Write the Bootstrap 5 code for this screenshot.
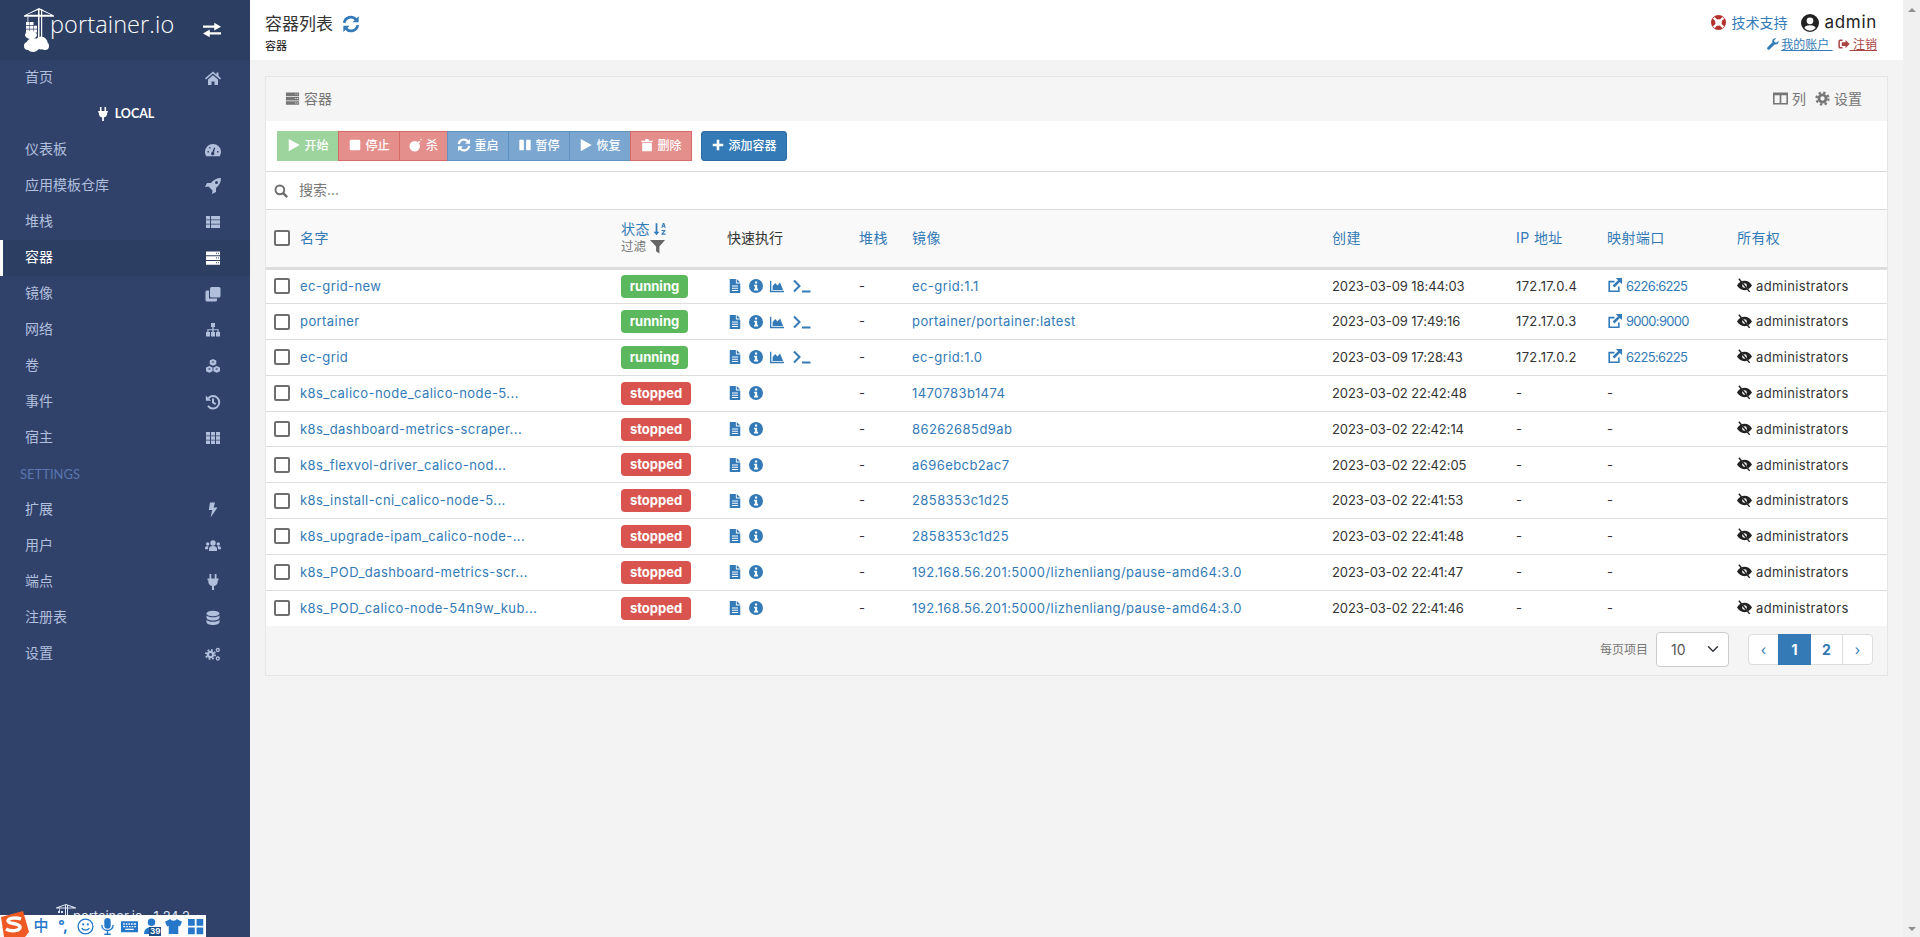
<!DOCTYPE html>
<html lang="zh">
<head>
<meta charset="utf-8">
<title>Portainer</title>
<link href="https://cdn.jsdelivr.net/npm/bootstrap@5.3.0/dist/css/bootstrap.min.css" rel="stylesheet">
<style>
html,body{height:937px;overflow:hidden}
body{font-family:Inter,"Noto Sans CJK SC",sans-serif;font-size:13px;color:#333;background:#f3f3f3;line-height:1.43}
a{color:#337ab7;text-decoration:none}
.ico{width:1em;height:1em;fill:currentColor;flex:none;vertical-align:-.12em}
.shell{height:937px}
.rail{width:250px;background:#30426a;color:#b1bfdd;flex:none}
.rail-top{height:60px;background:#2d3e63;padding-left:24px;padding-right:29px;color:#fff}
.logo-word{font-family:"Open Sans","Noto Sans",sans-serif;font-weight:300;font-size:23.500px;line-height:1;letter-spacing:.1px;margin-left:-6px;margin-top:-10px}
.rail-swap{font-size:18px}
.rail-item{height:36px;padding-left:25px;padding-right:29px;padding-bottom:2px;font-size:14px;color:#b1bfdd}
.rail-item .ico{font-size:16px;margin-top:2px}
.rail-item.on{background:#2d3e63;color:#fff;border-left:3px solid #fff;padding-left:22px}
.rail-env{height:36px;color:#fff;font-size:12.500px;font-weight:700;font-family:Lato,sans-serif}
.rail-env .ico{font-size:14px;margin-right:5px}
.rail-sec{height:36px;padding-left:20px;color:#5a76b0;font-family:Lato,sans-serif;font-size:13px}
.rail-foot{height:42px;padding-left:56px;color:#dfe5f2;font-size:13px;padding-top:9px}
.rail-foot svg{width:20px;height:12px;flex:none}
.rail-foot span{margin-top:4px;margin-left:-3px;line-height:16px;white-space:nowrap}
.stage{min-width:0}
.topbar{height:60px;background:#fff;padding:12px 26px 0 15px}
.crumb-title{font-size:17px;line-height:24px;color:#333}
.crumb-title .ico{color:#337ab7;font-size:18px;margin-left:9px;vertical-align:-.15em}
.crumb-sub{font-size:11px;line-height:16px;color:#111;margin-top:2px}
.who-a{font-size:14px;line-height:22px;margin-top:-1px}
.who-a .sup{color:#337ab7}
.who-a .life{color:#b5312c;font-size:15px;margin-right:5px}
.who-a .usr{font-size:18px;margin-left:14px;margin-right:5px;color:#222;vertical-align:-.2em}
.who-a .nm{font-size:17px;color:#222;letter-spacing:.7px}
.who-b{font-size:12px;line-height:16px;margin-top:3px}
.who-b a{text-decoration:underline}
.who-b .wr{color:#337ab7;margin-right:2px}
.who-b .red{color:#a94442;margin-left:5px}
.panel{margin:16px 15px 0;background:#f5f5f5;border:1px solid #e6e6e6;height:600px}
.panel-head{height:44px;padding:0 25px 0 19px;color:#767676;font-size:14px}
.panel-head .ico{font-size:15px;margin-right:4px;vertical-align:-.15em}
.panel-tools span{margin-left:9px}
.bar{height:51px;background:#fff;border-bottom:1px solid #d9d9d9;padding-left:11px;gap:9px}
.act{font-size:12px;padding:0;height:30px;color:#fff;border:1px solid;border-radius:0;line-height:28px;font-weight:500}
.act .ico{font-size:14px;margin-right:3px;vertical-align:-.17em}
.act-g{background:#9dd49d;border-color:#9dd49d}
.act-r{background:#e58f8c;border-color:#d66a66}
.act-b{background:#7ba6cf;border-color:#5f92c2}
.wa{width:62px}.wb{width:49px}.w-add{width:86px}
.act-add{background:#337ab7;border-color:#2e6da4;border-radius:3px}
.finder{height:38px;background:#fff;border-bottom:1px solid #d9d9d9;padding-left:8px;color:#777;font-size:14px}
.finder .ico{font-size:14px;margin-right:11px;color:#6d6d6d}
.grid-t{table-layout:fixed;width:1621px;margin:0;background:#fff;font-size:13px;--bs-table-bg:transparent}
.grid-t th,.grid-t td{padding:0 8px;vertical-align:middle;font-weight:400;white-space:nowrap;color:#333;border-color:#ddd}
.grid-t thead th{background:#f9f9f9;height:58px;border-bottom:3px solid #ddd;font-size:14px}
.grid-t td{height:35.800px}
.grid-t a{letter-spacing:.42px}
.grid-t .txt{letter-spacing:.36px}
.grid-t .when{letter-spacing:-.08px}
.grid-t .map{letter-spacing:-.7px}
.c1{width:347px}.c2{width:106px}.c3{width:132px}.c4{width:53px}.c5{width:420px}.c6{width:184px}.c7{width:91px}.c8{width:130px}.c9{width:158px}
.tick{width:16px;height:16px;border:2px solid #6f6f6f;border-radius:2px;margin-right:10px;flex:none;display:inline-block;background:#fff}
.st-sub{font-size:12.500px;color:#777;line-height:18px}
.st-sub .ico{font-size:15px;color:#666;vertical-align:-.2em}
.st-top{line-height:19px;margin-top:-2px}
.st-top .ico{font-size:14px;margin-left:3px;vertical-align:-.14em;color:#337ab7}
.tag{display:inline-block;height:23px;line-height:22px;color:#fff;font-weight:700;font-size:13px;border-radius:4px;text-align:center}
.tag-up{background:#5cb85c;width:67px}
.tag-down{background:#d9534f;width:70px}
.quick{color:#337ab7;font-size:14px;gap:7px;padding-left:1px}
.quick .ico:nth-child(4){font-size:18px;margin-left:2px}
.eye{font-size:15px;margin-right:4px;color:#222;vertical-align:-.15em}
.out{font-size:15px;margin-right:4px;color:#337ab7;vertical-align:-.15em}
.panel-foot{height:47px;padding-right:14px;font-size:12px;color:#777}
.per{width:73px;height:35px;font-size:14px;padding:4px 20px 4px 14px;margin:0 19px 0 8px;color:#555;border-color:#ccc;background-position:right 7px center;border-radius:4px;font-family:Inter,sans-serif}
.pg{margin:0;--bs-pagination-font-size:14px;--bs-pagination-padding-x:0;--bs-pagination-padding-y:0;--bs-pagination-color:#337ab7;--bs-pagination-active-bg:#337ab7;--bs-pagination-active-border-color:#337ab7;--bs-pagination-border-color:#ddd;--bs-pagination-border-radius:4px}
.pg .page-link{height:31px;line-height:29px;text-align:center;font-weight:700}
.pg .w1{width:31px;font-weight:400}.pg .w2{width:33px}
.sbar{width:17px;background:#f0f0f0;flex:none;height:937px;padding:8px 0 6px}
.sbar i{display:block;width:0;height:0;border-left:4px solid transparent;border-right:4px solid transparent;margin:0 auto}
.sbar .up{border-bottom:4px solid #8f8f8f}
.sbar .dn{border-top:4px solid #8f8f8f}
.ime{position:absolute;left:0;bottom:0;width:206px;height:22px;background:#fff;color:#2477c9;padding-left:30px}
.slot{width:22px;height:22px;flex:none;font-size:15px;font-weight:500}
.slot .ico{font-size:17px}
.ime-logo{position:absolute;left:0;bottom:0;width:29px;height:26px}
.ime-n{position:absolute;left:149px;bottom:1px;background:#1d4f86;color:#fff;font-size:8px;line-height:9px;padding:0 1px;font-weight:700}
</style>
</head>
<body>
<svg width="0" height="0" class="position-absolute">
<defs>
<symbol id="i-swap" viewBox="0 0 16 16"><path d="M0 4h10V1.500L16 5l-6 3.500V6H0zM16 10H6V7.500L0 11l6 3.500V12h10z"/></symbol>
<symbol id="i-home" viewBox="0 0 16 16"><path d="M8 1.500 0 8.200l1 1.200 7-5.900 7 5.900 1-1.200-2.500-2.100V2.500h-2v2.100z"/><path d="M3 9.500 8 5.300l5 4.200V15H9.500v-3.500h-3V15H3z"/></symbol>
<symbol id="i-plug" viewBox="0 0 16 16"><path d="M4.500 0H6.300v4.500H4.500zM9.700 0h1.800v4.500H9.700zM2.500 4.500h11v1.700h-.8v1.500c0 2.200-1.500 3.800-3.700 4.200V16H7v-4.100C4.800 11.500 3.300 9.900 3.300 7.700V6.200h-.8z"/></symbol>
<symbol id="i-gauge" viewBox="0 0 16 16"><path fill-rule="evenodd" d="M8 2a8 8 0 0 0-8 8c0 1.700.5 3.100 1.300 4.300h13.400A8 8 0 0 0 16 10a8 8 0 0 0-8-8zM9 5.500 7.300 10a1.700 1.700 0 1 0 1.600.4l1.300-4.500zM2.500 9h1.500v1.400H2.500zM12 9h1.500v1.400H12zM4.200 5h1.300v1.400H4.200z"/></symbol>
<symbol id="i-rocket" viewBox="0 0 16 16"><path fill-rule="evenodd" d="M16 0c-4.500 0-7.700 2-10 5H2L0 9l3.500-.5 4 4L7 16l4-2v-4c3-2.300 5-5.500 5-10zM11.500 3a1.500 1.500 0 1 1 0 3 1.500 1.500 0 0 1 0-3z"/></symbol>
<symbol id="i-list" viewBox="0 0 16 16"><path d="M1 2h4v3.500H1zM6 2h9v3.500H6zM1 6.300h4v3.400H1zM6 6.300h9v3.400H6zM1 10.500h4V14H1zM6 10.500h9V14H6z"/></symbol>
<symbol id="i-server" viewBox="0 0 16 16"><path fill-rule="evenodd" d="M1 1.500h14v3.800H1zM11 2.800v1h1v-1zM13 2.800v1h1v-1zM1 6.200h14V10H1zM11 7.500v1h1v-1zM13 7.500v1h1v-1zM1 10.900h14v3.800H1zM11 12.300v1h1v-1zM13 12.300v1h1v-1z"/></symbol>
<symbol id="i-clone" viewBox="0 0 16 16"><rect x="5" y="1" width="10.500" height="10.500" rx="1.500"/><path d="M1.800 4.500H4v8h8v2a1.500 1.500 0 0 1-1.500 1H1.800A1.500 1.500 0 0 1 .5 14V6a1.500 1.500 0 0 1 1.300-1.500z"/></symbol>
<symbol id="i-site" viewBox="0 0 16 16"><path d="M6 1h4v4H8.700v2.200h5V10H15v4.500h-4V10h1.500V8.300H8.700V10H10v4.500H6V10h1.300V8.300H3.500V10H5v4.500H1V10h1.300V7.200h5V5H6z"/></symbol>
<symbol id="i-cubes" viewBox="0 0 16 16"><path fill-rule="evenodd" d="M8 1l3.300 1.600v3.600L8 7.800 4.700 6.200V2.600zM8 3.200 6.500 4 8 4.800 9.500 4zM4.300 8l3.300 1.600v3.600l-3.300 1.600L1 13.200V9.600zM4.300 10.200 2.800 11l1.500.8 1.500-.8zM11.700 8 15 9.600v3.600l-3.300 1.600-3.300-1.600V9.600zM11.700 10.200 10.200 11l1.500.8 1.500-.8z"/></symbol>
<symbol id="i-hist" viewBox="0 0 16 16"><g fill="none" stroke="currentColor" stroke-width="2"><path d="M3.300 4.300A6.200 6.200 0 1 1 3 11.900"/><path d="M8 4.500V8.500l2.700 1.600"/></g><path d="M.8 1.500v5.300h5.300z"/></symbol>
<symbol id="i-th" viewBox="0 0 16 16"><path d="M1 2h4v3.500H1zM6 2h4v3.500H6zM11 2h4v3.500h-4zM1 6.300h4v3.400H1zM6 6.300h4v3.400H6zM11 6.300h4v3.400h-4zM1 10.500h4V14H1zM6 10.500h4V14H6zM11 10.500h4V14h-4z"/></symbol>
<symbol id="i-bolt" viewBox="0 0 16 16"><path d="M10 .5H5L3.800 8h3.400L5.600 15.500 12.500 5.500H8.600z"/></symbol>
<symbol id="i-users" viewBox="0 0 16 16"><circle cx="8" cy="5" r="2.700"/><circle cx="2.700" cy="6" r="1.700"/><circle cx="13.300" cy="6" r="1.700"/><path d="M4 13V11c0-1.800 1.500-3 4-3s4 1.200 4 3v2zM0 11.300V10c0-1.200 1-1.800 2.300-1.800h1.300C3.200 9 3 10 3 11.300zM16 11.300V10c0-1.200-1-1.800-2.300-1.800h-1.300c.4.800.6 1.800.6 3.100z"/></symbol>
<symbol id="i-db" viewBox="0 0 16 16"><ellipse cx="8" cy="3.500" rx="6.500" ry="2.800"/><path d="M1.500 5.300v2.400C1.500 9.300 4.400 10.500 8 10.500s6.500-1.200 6.500-2.800V5.300C13.300 6.800 10.800 7.300 8 7.300S2.700 6.800 1.500 5.300z"/><path d="M1.500 9.800v2.400C1.500 13.800 4.400 15 8 15s6.500-1.200 6.500-2.800V9.800c-1.200 1.500-3.700 2-6.500 2s-5.300-.5-6.500-2z"/></symbol>
<symbol id="i-cogs" viewBox="0 0 16 16"><g fill="none" stroke="currentColor"><circle cx="5.500" cy="8.500" r="2.600" stroke-width="2.200"/><circle cx="5.500" cy="8.500" r="4.600" stroke-width="1.800" stroke-dasharray="1.800 1.810"/><circle cx="12.800" cy="4" r="1.500" stroke-width="1.300"/><circle cx="12.800" cy="12.500" r="1.500" stroke-width="1.300"/></g></symbol>
<symbol id="i-cog" viewBox="0 0 16 16"><g fill="none" stroke="currentColor"><circle cx="8" cy="8" r="3.800" stroke-width="3"/><circle cx="8" cy="8" r="6.400" stroke-width="2.400" stroke-dasharray="2.500 2.526"/></g></symbol>
<symbol id="i-sync" viewBox="0 0 16 16"><g fill="none" stroke="currentColor" stroke-width="2.400"><path d="M2 7A6 6 0 0 1 12.500 4"/><path d="M14 9A6 6 0 0 1 3.500 12"/></g><path d="M14.800 1v5.500H9.300zM1.200 15V9.500h5.500z"/></symbol>
<symbol id="i-life" viewBox="0 0 16 16"><path fill-rule="evenodd" d="M8 0a8 8 0 1 0 0 16A8 8 0 0 0 8 0zm0 4.500a3.500 3.500 0 1 1 0 7 3.500 3.500 0 0 1 0-7z"/><path fill="#fff" d="m2 4 1.800-2 3 3-1.800 1.800zM14 4l-1.800-2-3 3 1.800 1.800zM2 12l1.800 2 3-3L5 9.200zM14 12l-1.800 2-3-3 1.800-1.800z"/></symbol>
<symbol id="i-user" viewBox="0 0 16 16"><path fill-rule="evenodd" d="M8 0a8 8 0 1 0 0 16A8 8 0 0 0 8 0zm0 3a3 3 0 1 1 0 6 3 3 0 0 1 0-6zM3 12.500C3.500 10.800 5 10 8 10s4.500.8 5 2.500a6.500 6.500 0 0 1-10 0z"/></symbol>
<symbol id="i-wrench" viewBox="0 0 16 16"><path d="M15.500 3.500 12.800 6 10 5.500 9.500 3 12.200.5C9.800-.3 7 1.500 7 4c0 .7.100 1.200.3 1.700L.8 12.200a1.900 1.900 0 0 0 2.800 2.800l6.600-6.500c2.800 1 5.800-1.600 5.300-5z"/></symbol>
<symbol id="i-out" viewBox="0 0 16 16"><path d="M6 2H3a2.500 2.500 0 0 0-2.500 2.500v7A2.500 2.500 0 0 0 3 14h3v-2H3.200a.7.700 0 0 1-.7-.7V4.700a.7.700 0 0 1 .7-.7H6z"/><path d="M10 2.500 15.500 8 10 13.500V10.500H5v-5h5z"/></symbol>
<symbol id="i-cols" viewBox="0 0 16 16"><path fill-rule="evenodd" d="M0 1.500h16v13H0zM1.700 4.500v8.300h5.400V4.500zM8.900 4.500v8.300h5.400V4.500z"/></symbol>
<symbol id="i-play" viewBox="0 0 16 16"><path d="M2 1l12.500 7L2 15z"/></symbol>
<symbol id="i-stop" viewBox="0 0 16 16"><rect x="2" y="2" width="12" height="12" rx="1.500"/></symbol>
<symbol id="i-bomb" viewBox="0 0 16 16"><circle cx="6.500" cy="9.500" r="6"/><path d="m10 4.500 1.500-1.500 1.500 1.500-1.500 1.500zM13 1h1.500v1.500H13z"/></symbol>
<symbol id="i-pause" viewBox="0 0 16 16"><rect x="1.500" y="2" width="5.200" height="12" rx="1"/><rect x="9.300" y="2" width="5.200" height="12" rx="1"/></symbol>
<symbol id="i-trash" viewBox="0 0 16 16"><path d="M1.500 3h4l1-1.800h3l1 1.800h4v1.500h-13zM2.500 5.500h11V15H2.500z"/></symbol>
<symbol id="i-plus" viewBox="0 0 16 16"><path d="M6.500 2h3v4.500H14v3H9.500V14h-3V9.500H2v-3h4.500z"/></symbol>
<symbol id="i-find" viewBox="0 0 16 16"><g fill="none" stroke="currentColor" stroke-width="2.200"><circle cx="6.700" cy="6.700" r="5"/><path d="m10.500 10.500 4.500 4.500" stroke-width="2.800"/></g></symbol>
<symbol id="i-az" viewBox="0 0 16 16"><path d="M3 1.500h2v9.500h2.300L4 15 .7 11H3z"/><path d="M9.500 6.500 11.300 1h1.500l1.800 5.500h-1.400l-.3-1h-1.700l-.3 1zM11.500 4.400h1l-.5-1.700zM9.800 9h4.500v1.100l-2.800 3.100h2.900v1.300H9.600v-1.100l2.800-3.100H9.800z"/></symbol>
<symbol id="i-funnel" viewBox="0 0 16 16"><path d="M0 1h16L10 8v7.500L6.500 13V8z"/></symbol>
<symbol id="i-doc" viewBox="0 0 16 16"><path fill-rule="evenodd" d="M2 0h7v5h5v11H2zM10 0l4 4h-4zM4.500 7.500v1.200h7V7.500zM4.500 10v1.200h7V10zM4.500 12.500v1.200h7v-1.200z"/></symbol>
<symbol id="i-info" viewBox="0 0 16 16"><path fill-rule="evenodd" d="M8 0a8 8 0 1 0 0 16A8 8 0 0 0 8 0zM6.800 2.800h2.500v2.400H6.800zM5.800 6.600h3.500V11.200h1.100V13H5.800v-1.800h1V8.400h-1z"/></symbol>
<symbol id="i-chart" viewBox="0 0 16 16"><path d="M0 2h1.500v11.500H16V15H0z"/><path d="M3 12.500V8l3-3.500 2.500 3L11.500 4 15 12.500z"/></symbol>
<symbol id="i-term" viewBox="0 0 18 16"><path fill="none" stroke="currentColor" stroke-width="2" d="m1 2.500 5.500 5.500L1 13.500"/><path d="M9 12.500h8.500v2H9z"/></symbol>
<symbol id="i-link" viewBox="0 0 16 16"><path d="M1.500 3H8v1.700H3.200v8.600h8.600V9h1.700v6h-12z"/><path d="M9.500 0H16v6.500l-2.300-2.300L8 10 6 8l5.800-5.700z"/></symbol>
<symbol id="i-eye" viewBox="0 0 16 16"><path fill-rule="evenodd" d="M8 3C4.500 3 1.700 5.200 0 8c1.700 2.800 4.500 5 8 5s6.300-2.200 8-5c-1.700-2.800-4.500-5-8-5zm0 2.500a2.500 2.500 0 1 1 0 5 2.500 2.500 0 0 1 0-5z"/><path fill="none" stroke="#fff" stroke-width="1" d="M2.800 1.200l10.700 13"/><path fill="none" stroke="currentColor" stroke-width="1.600" d="M2 .8l11.500 14"/></symbol>
<symbol id="i-smile" viewBox="0 0 16 16"><g fill="none" stroke="currentColor" stroke-width="1.200"><circle cx="8" cy="8" r="7"/><path d="M4.500 9.500c1.500 2.500 5.500 2.500 7 0"/></g><circle cx="5.800" cy="6" r="1"/><circle cx="10.200" cy="6" r="1"/></symbol>
<symbol id="i-mic" viewBox="0 0 16 16"><rect x="5" y="0" width="6" height="10" rx="3"/><path fill="none" stroke="currentColor" stroke-width="1.300" d="M2.700 6.500c0 7 10.600 7 10.600 0M8 12v3M5 15.300h6"/></symbol>
<symbol id="i-keys" viewBox="0 0 16 16"><path fill-rule="evenodd" d="M0 3h16v10.500H0zM2 5v1.300h1.500V5zM4.500 5v1.300H6V5zM7 5v1.300h1.500V5zM9.500 5v1.300H11V5zM12 5v1.300h2V5zM2 7.500v1.300h2V7.500zM5 7.500v1.300h1.500V7.500zM7.500 7.500v1.300H9V7.500zM10 7.500v1.300h1.500V7.500zM12.500 7.500v1.300H14V7.500zM4 10v1.300h8V10z"/></symbol>
<symbol id="i-pers" viewBox="0 0 16 16"><circle cx="8" cy="4" r="3.500"/><path d="M1 15c0-4.500 3-6.500 7-6.500s7 2 7 6.500z"/></symbol>
<symbol id="i-shirt" viewBox="0 0 16 16"><path d="M5 1 0 3.500 2 8l1.500-.7V15h9V7.300L14 8l2-4.500L11 1C10.500 3 5.500 3 5 1z"/></symbol>
<symbol id="i-apps" viewBox="0 0 16 16"><path d="M1 1h6.300v6.300H1zM9 1h6.300v6.300H9zM1 9h6.300v6.300H1zM9 9h6.300v6.300H9z"/></symbol>
</defs>
</svg>

<div class="shell d-flex position-relative">
  <aside class="rail d-flex flex-column">
    <div class="rail-top d-flex align-items-center justify-content-between">
      <div class="d-flex align-items-center">
        <svg width="32" height="44" viewBox="0 0 32 44" fill="#fff" aria-hidden="true"><path d="M0 7.500 15 0l15 7.500v1.300H0zM3 6.700h24L15 1.500z"/><path d="M14 1h1.500v30H14zM17 1h1.200v30H17z"/><path d="M3.500 9h.8v5h-.8z"/><path d="M2 14h3.500v3H2zM6 14h3.500v3H6zM2 17.700h3.500v3H2zM6 17.700h3.500v3H6zM10 17.700h3v3h-3zM2 21.500h3.500v3H2zM6 21.500h3.500v3H6zM10 21.500h3v3h-3z"/><ellipse cx="7" cy="27" rx="6" ry="4"/><circle cx="9" cy="37" r="7"/><circle cx="17" cy="35" r="6.500"/><circle cx="4" cy="38" r="4"/><circle cx="21" cy="38" r="4"/></svg>
        <span class="logo-word">portainer.io</span>
      </div>
      <svg class="ico rail-swap"><use href="#i-swap"/></svg>
    </div>
    <a class="rail-item d-flex align-items-center justify-content-between" href="#">首页<svg class="ico"><use href="#i-home"/></svg></a>
    <div class="rail-env d-flex align-items-center justify-content-center"><svg class="ico"><use href="#i-plug"/></svg>LOCAL</div>
    <a class="rail-item d-flex align-items-center justify-content-between" href="#">仪表板<svg class="ico"><use href="#i-gauge"/></svg></a>
    <a class="rail-item d-flex align-items-center justify-content-between" href="#">应用模板仓库<svg class="ico"><use href="#i-rocket"/></svg></a>
    <a class="rail-item d-flex align-items-center justify-content-between" href="#">堆栈<svg class="ico"><use href="#i-list"/></svg></a>
    <a class="rail-item on d-flex align-items-center justify-content-between" href="#">容器<svg class="ico"><use href="#i-server"/></svg></a>
    <a class="rail-item d-flex align-items-center justify-content-between" href="#">镜像<svg class="ico"><use href="#i-clone"/></svg></a>
    <a class="rail-item d-flex align-items-center justify-content-between" href="#">网络<svg class="ico"><use href="#i-site"/></svg></a>
    <a class="rail-item d-flex align-items-center justify-content-between" href="#">卷<svg class="ico"><use href="#i-cubes"/></svg></a>
    <a class="rail-item d-flex align-items-center justify-content-between" href="#">事件<svg class="ico"><use href="#i-hist"/></svg></a>
    <a class="rail-item d-flex align-items-center justify-content-between" href="#">宿主<svg class="ico"><use href="#i-th"/></svg></a>
    <div class="rail-sec d-flex align-items-center">SETTINGS</div>
    <a class="rail-item d-flex align-items-center justify-content-between" href="#">扩展<svg class="ico"><use href="#i-bolt"/></svg></a>
    <a class="rail-item d-flex align-items-center justify-content-between" href="#">用户<svg class="ico"><use href="#i-users"/></svg></a>
    <a class="rail-item d-flex align-items-center justify-content-between" href="#">端点<svg class="ico"><use href="#i-plug"/></svg></a>
    <a class="rail-item d-flex align-items-center justify-content-between" href="#">注册表<svg class="ico"><use href="#i-db"/></svg></a>
    <a class="rail-item d-flex align-items-center justify-content-between" href="#">设置<svg class="ico"><use href="#i-cogs"/></svg></a>
    <div class="rail-foot mt-auto d-flex align-items-start"><svg viewBox="0 0 20 12" fill="#dfe5f2" aria-hidden="true"><path d="M0 3.500 10 0l10 3.500V4.500H0zM3 3.500h14L10 1z"/><path d="M9 1h1v11H9zM11 1h1v11h-1zM3 4.500h.8V7H3zM2 7h2v2H2zM5 7h2v2H5z"/></svg><span>portainer.io&nbsp;&nbsp;&nbsp;1.24.2</span></div>
  </aside>

  <main class="stage flex-grow-1">
    <header class="topbar d-flex justify-content-between">
      <div>
        <div class="crumb-title">容器列表<svg class="ico"><use href="#i-sync"/></svg></div>
        <div class="crumb-sub">容器</div>
      </div>
      <div class="text-end">
        <div class="who-a"><svg class="ico life"><use href="#i-life"/></svg><a class="sup" href="#">技术支持</a><svg class="ico usr"><use href="#i-user"/></svg><span class="nm">admin</span></div>
        <div class="who-b"><svg class="ico wr"><use href="#i-wrench"/></svg><a href="#">我的账户 </a><a class="red" href="#"><svg class="ico"><use href="#i-out"/></svg> 注销</a></div>
      </div>
    </header>

    <section class="panel">
      <div class="panel-head d-flex align-items-center justify-content-between">
        <div><svg class="ico"><use href="#i-server"/></svg>容器</div>
        <div class="panel-tools"><span><svg class="ico"><use href="#i-cols"/></svg>列</span><span><svg class="ico"><use href="#i-cog"/></svg>设置</span></div>
      </div>
      <div class="bar d-flex align-items-center">
        <div class="btn-group">
          <button class="btn act act-g wa"><svg class="ico"><use href="#i-play"/></svg>开始</button>
          <button class="btn act act-r wa"><svg class="ico"><use href="#i-stop"/></svg>停止</button>
          <button class="btn act act-r wb"><svg class="ico"><use href="#i-bomb"/></svg>杀</button>
          <button class="btn act act-b wa"><svg class="ico"><use href="#i-sync"/></svg>重启</button>
          <button class="btn act act-b wa"><svg class="ico"><use href="#i-pause"/></svg>暂停</button>
          <button class="btn act act-b wa"><svg class="ico"><use href="#i-play"/></svg>恢复</button>
          <button class="btn act act-r wa"><svg class="ico"><use href="#i-trash"/></svg>删除</button>
        </div>
        <button class="btn act act-add w-add"><svg class="ico"><use href="#i-plus"/></svg>添加容器</button>
      </div>
      <div class="finder d-flex align-items-center"><svg class="ico"><use href="#i-find"/></svg>搜索...</div>
      <table class="table grid-t">
        <colgroup><col class="c1"><col class="c2"><col class="c3"><col class="c4"><col class="c5"><col class="c6"><col class="c7"><col class="c8"><col class="c9"></colgroup>
        <thead>
          <tr>
            <th><div class="d-flex align-items-center"><span class="tick"></span><a href="#">名字</a></div></th>
            <th><div class="st-top"><a href="#">状态</a><svg class="ico"><use href="#i-az"/></svg></div><div class="st-sub">过滤 <svg class="ico"><use href="#i-funnel"/></svg></div></th>
            <th>快速执行</th>
            <th><a href="#">堆栈</a></th>
            <th><a href="#">镜像</a></th>
            <th><a href="#">创建</a></th>
            <th><a href="#">IP 地址</a></th>
            <th><a href="#">映射端口</a></th>
            <th><a href="#">所有权</a></th>
          </tr>
        </thead>
        <tbody>
          <tr><td><div class="d-flex align-items-center"><span class="tick"></span><a href="#">ec-grid-new</a></div></td><td><span class="tag tag-up">running</span></td><td><div class="quick d-flex align-items-center"><svg class="ico"><use href="#i-doc"/></svg><svg class="ico"><use href="#i-info"/></svg><svg class="ico"><use href="#i-chart"/></svg><svg class="ico"><use href="#i-term"/></svg></div></td><td class="txt">-</td><td><a href="#">ec-grid:1.1</a></td><td class="txt when">2023-03-09 18:44:03</td><td class="txt">172.17.0.4</td><td><a class="map" href="#"><svg class="ico out"><use href="#i-link"/></svg>6226:6225</a></td><td class="txt"><svg class="ico eye"><use href="#i-eye"/></svg>administrators</td></tr>
          <tr><td><div class="d-flex align-items-center"><span class="tick"></span><a href="#">portainer</a></div></td><td><span class="tag tag-up">running</span></td><td><div class="quick d-flex align-items-center"><svg class="ico"><use href="#i-doc"/></svg><svg class="ico"><use href="#i-info"/></svg><svg class="ico"><use href="#i-chart"/></svg><svg class="ico"><use href="#i-term"/></svg></div></td><td class="txt">-</td><td><a href="#">portainer/portainer:latest</a></td><td class="txt when">2023-03-09 17:49:16</td><td class="txt">172.17.0.3</td><td><a class="map" href="#"><svg class="ico out"><use href="#i-link"/></svg>9000:9000</a></td><td class="txt"><svg class="ico eye"><use href="#i-eye"/></svg>administrators</td></tr>
          <tr><td><div class="d-flex align-items-center"><span class="tick"></span><a href="#">ec-grid</a></div></td><td><span class="tag tag-up">running</span></td><td><div class="quick d-flex align-items-center"><svg class="ico"><use href="#i-doc"/></svg><svg class="ico"><use href="#i-info"/></svg><svg class="ico"><use href="#i-chart"/></svg><svg class="ico"><use href="#i-term"/></svg></div></td><td class="txt">-</td><td><a href="#">ec-grid:1.0</a></td><td class="txt when">2023-03-09 17:28:43</td><td class="txt">172.17.0.2</td><td><a class="map" href="#"><svg class="ico out"><use href="#i-link"/></svg>6225:6225</a></td><td class="txt"><svg class="ico eye"><use href="#i-eye"/></svg>administrators</td></tr>
          <tr><td><div class="d-flex align-items-center"><span class="tick"></span><a href="#">k8s_calico-node_calico-node-5...</a></div></td><td><span class="tag tag-down">stopped</span></td><td><div class="quick d-flex align-items-center"><svg class="ico"><use href="#i-doc"/></svg><svg class="ico"><use href="#i-info"/></svg></div></td><td class="txt">-</td><td><a href="#">1470783b1474</a></td><td class="txt when">2023-03-02 22:42:48</td><td class="txt">-</td><td class="txt">-</td><td class="txt"><svg class="ico eye"><use href="#i-eye"/></svg>administrators</td></tr>
          <tr><td><div class="d-flex align-items-center"><span class="tick"></span><a href="#">k8s_dashboard-metrics-scraper...</a></div></td><td><span class="tag tag-down">stopped</span></td><td><div class="quick d-flex align-items-center"><svg class="ico"><use href="#i-doc"/></svg><svg class="ico"><use href="#i-info"/></svg></div></td><td class="txt">-</td><td><a href="#">86262685d9ab</a></td><td class="txt when">2023-03-02 22:42:14</td><td class="txt">-</td><td class="txt">-</td><td class="txt"><svg class="ico eye"><use href="#i-eye"/></svg>administrators</td></tr>
          <tr><td><div class="d-flex align-items-center"><span class="tick"></span><a href="#">k8s_flexvol-driver_calico-nod...</a></div></td><td><span class="tag tag-down">stopped</span></td><td><div class="quick d-flex align-items-center"><svg class="ico"><use href="#i-doc"/></svg><svg class="ico"><use href="#i-info"/></svg></div></td><td class="txt">-</td><td><a href="#">a696ebcb2ac7</a></td><td class="txt when">2023-03-02 22:42:05</td><td class="txt">-</td><td class="txt">-</td><td class="txt"><svg class="ico eye"><use href="#i-eye"/></svg>administrators</td></tr>
          <tr><td><div class="d-flex align-items-center"><span class="tick"></span><a href="#">k8s_install-cni_calico-node-5...</a></div></td><td><span class="tag tag-down">stopped</span></td><td><div class="quick d-flex align-items-center"><svg class="ico"><use href="#i-doc"/></svg><svg class="ico"><use href="#i-info"/></svg></div></td><td class="txt">-</td><td><a href="#">2858353c1d25</a></td><td class="txt when">2023-03-02 22:41:53</td><td class="txt">-</td><td class="txt">-</td><td class="txt"><svg class="ico eye"><use href="#i-eye"/></svg>administrators</td></tr>
          <tr><td><div class="d-flex align-items-center"><span class="tick"></span><a href="#">k8s_upgrade-ipam_calico-node-...</a></div></td><td><span class="tag tag-down">stopped</span></td><td><div class="quick d-flex align-items-center"><svg class="ico"><use href="#i-doc"/></svg><svg class="ico"><use href="#i-info"/></svg></div></td><td class="txt">-</td><td><a href="#">2858353c1d25</a></td><td class="txt when">2023-03-02 22:41:48</td><td class="txt">-</td><td class="txt">-</td><td class="txt"><svg class="ico eye"><use href="#i-eye"/></svg>administrators</td></tr>
          <tr><td><div class="d-flex align-items-center"><span class="tick"></span><a href="#">k8s_POD_dashboard-metrics-scr...</a></div></td><td><span class="tag tag-down">stopped</span></td><td><div class="quick d-flex align-items-center"><svg class="ico"><use href="#i-doc"/></svg><svg class="ico"><use href="#i-info"/></svg></div></td><td class="txt">-</td><td><a href="#">192.168.56.201:5000/lizhenliang/pause-amd64:3.0</a></td><td class="txt when">2023-03-02 22:41:47</td><td class="txt">-</td><td class="txt">-</td><td class="txt"><svg class="ico eye"><use href="#i-eye"/></svg>administrators</td></tr>
          <tr><td class="border-0"><div class="d-flex align-items-center"><span class="tick"></span><a href="#">k8s_POD_calico-node-54n9w_kub...</a></div></td><td class="border-0"><span class="tag tag-down">stopped</span></td><td class="border-0"><div class="quick d-flex align-items-center"><svg class="ico"><use href="#i-doc"/></svg><svg class="ico"><use href="#i-info"/></svg></div></td><td class="txt border-0">-</td><td class="border-0"><a href="#">192.168.56.201:5000/lizhenliang/pause-amd64:3.0</a></td><td class="txt when border-0">2023-03-02 22:41:46</td><td class="txt border-0">-</td><td class="txt border-0">-</td><td class="txt border-0"><svg class="ico eye"><use href="#i-eye"/></svg>administrators</td></tr>
        </tbody>
      </table>
      <div class="panel-foot d-flex align-items-center justify-content-end">
        <span>每页项目</span>
        <select class="form-select per" aria-label="每页项目"><option>10</option></select>
        <ul class="pagination pg">
          <li class="page-item"><a class="page-link w1" href="#">‹</a></li>
          <li class="page-item active"><a class="page-link w2" href="#">1</a></li>
          <li class="page-item"><a class="page-link w2" href="#">2</a></li>
          <li class="page-item"><a class="page-link w1" href="#">›</a></li>
        </ul>
      </div>
    </section>
  </main>

  <div class="sbar d-flex flex-column justify-content-between"><i class="up"></i><i class="dn"></i></div>

  <div class="ime d-flex align-items-center">
    <span class="slot d-flex align-items-center justify-content-center">中</span>
    <span class="slot d-flex align-items-center justify-content-center fw-bold">°,</span>
    <span class="slot d-flex align-items-center justify-content-center"><svg class="ico"><use href="#i-smile"/></svg></span>
    <span class="slot d-flex align-items-center justify-content-center"><svg class="ico"><use href="#i-mic"/></svg></span>
    <span class="slot d-flex align-items-center justify-content-center"><svg class="ico"><use href="#i-keys"/></svg></span>
    <span class="slot d-flex align-items-center justify-content-center"><svg class="ico"><use href="#i-pers"/></svg></span>
    <span class="slot d-flex align-items-center justify-content-center"><svg class="ico"><use href="#i-shirt"/></svg></span>
    <span class="slot d-flex align-items-center justify-content-center"><svg class="ico"><use href="#i-apps"/></svg></span>
    <span class="ime-n">39</span>
  </div>
  <svg class="ime-logo" viewBox="0 0 29 26" aria-hidden="true"><path fill="#ef5a24" d="M1 6 23 0l6 21-4 5H4z"/><path fill="none" stroke="#fff" stroke-width="3.500" d="M21 8c-5-2-13-1-13 2s12 2 12 6-9 5-14 2"/></svg>
</div>
</body>
</html>
